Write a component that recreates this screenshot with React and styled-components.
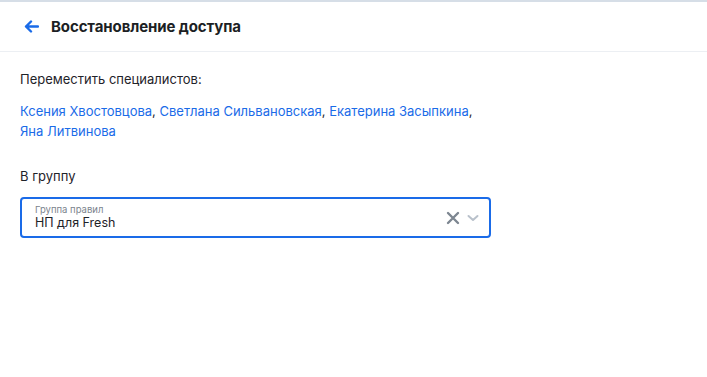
import React from "react";
import styled, { createGlobalStyle } from "styled-components";

const Global = createGlobalStyle`
  html, body { margin: 0; padding: 0; background: #fff; }
  body { font-family: Inter, "Noto Sans", sans-serif; color: #1f2329; }
`;

const Page = styled.div`
  width: 707px;
  height: 377px;
  border-top: 2px solid #d6dee7;
  box-sizing: border-box;
  display: flex;
  flex-direction: column;
`;

const Header = styled.header`
  height: 49px;
  border-bottom: 1px solid #eceff3;
  display: flex;
  align-items: center;
  padding-left: 23px;
  gap: 12px;
  box-sizing: content-box;
`;

const BackButton = styled.button`
  border: 0;
  background: none;
  padding: 0;
  width: 16px;
  height: 16px;
  display: flex;
  align-items: center;
  justify-content: center;
  cursor: pointer;
`;

const Title = styled.h1`
  margin: 0;
  font-size: 15px;
  font-weight: 700;
  color: #1c1f24;
  letter-spacing: -0.1px;
`;

const Body = styled.main`
  padding: 17px 20px 0 20px;
  display: flex;
  flex-direction: column;
`;

const Label = styled.div`
  font-size: 13px;
  line-height: 20px;
  color: #1f2329;
`;

const Names = styled.div`
  margin-top: 12px;
  font-size: 13px;
  line-height: 20px;
  color: #1f2329;
  width: 470px;
`;

const Link = styled.a`
  color: #1a6be8;
  text-decoration: none;
`;

const GroupLabel = styled(Label)`
  margin-top: 25px;
`;

const Select = styled.div`
  margin-top: 11px;
  width: 471px;
  height: 41px;
  box-sizing: border-box;
  border: 2px solid #1a6be8;
  border-radius: 4px;
  display: flex;
  align-items: center;
  padding: 0 9px 0 13px;
`;

const SelectText = styled.div`
  flex: 1;
  display: flex;
  flex-direction: column;
`;

const SmallLabel = styled.span`
  font-size: 9.5px;
  line-height: 11px;
  color: #7b838d;
`;

const Value = styled.span`
  font-size: 12.5px;
  line-height: 16px;
  color: #1f2329;
`;

const Icons = styled.div`
  display: flex;
  align-items: center;
  gap: 6px;
`;

const names = [
  "Ксения Хвостовцова",
  "Светлана Сильвановская",
  "Екатерина Засыпкина",
  "Яна Литвинова",
];

export default function App() {
  return (
    <>
      <Global />
      <Page>
        <Header>
          <BackButton aria-label="Назад">
            <svg width="15" height="13" viewBox="0 0 15 13" fill="none">
              <path d="M14 6.5H2M7 1.5L2 6.5L7 11.5" stroke="#1a6be8" strokeWidth="2.4" strokeLinecap="round" strokeLinejoin="round" />
            </svg>
          </BackButton>
          <Title>Восстановление доступа</Title>
        </Header>
        <Body>
          <Label>Переместить специалистов:</Label>
          <Names>
            {names.map((n, i) => (
              <React.Fragment key={n}>
                <Link href="#">{n}</Link>
                {i < names.length - 1 ? ", " : ""}
              </React.Fragment>
            ))}
          </Names>
          <GroupLabel>В группу</GroupLabel>
          <Select>
            <SelectText>
              <SmallLabel>Группа правил</SmallLabel>
              <Value>НП для Fresh</Value>
            </SelectText>
            <Icons>
              <svg width="14" height="14" viewBox="0 0 14 14">
                <path d="M2 2L12 12M12 2L2 12" stroke="#7d8691" strokeWidth="2.4" strokeLinecap="round" />
              </svg>
              <svg width="14" height="14" viewBox="0 0 14 14">
                <path d="M2.5 5L7 9L11.5 5" stroke="#b9c1cb" strokeWidth="2" fill="none" strokeLinecap="round" strokeLinejoin="round" />
              </svg>
            </Icons>
          </Select>
        </Body>
      </Page>
    </>
  );
}
